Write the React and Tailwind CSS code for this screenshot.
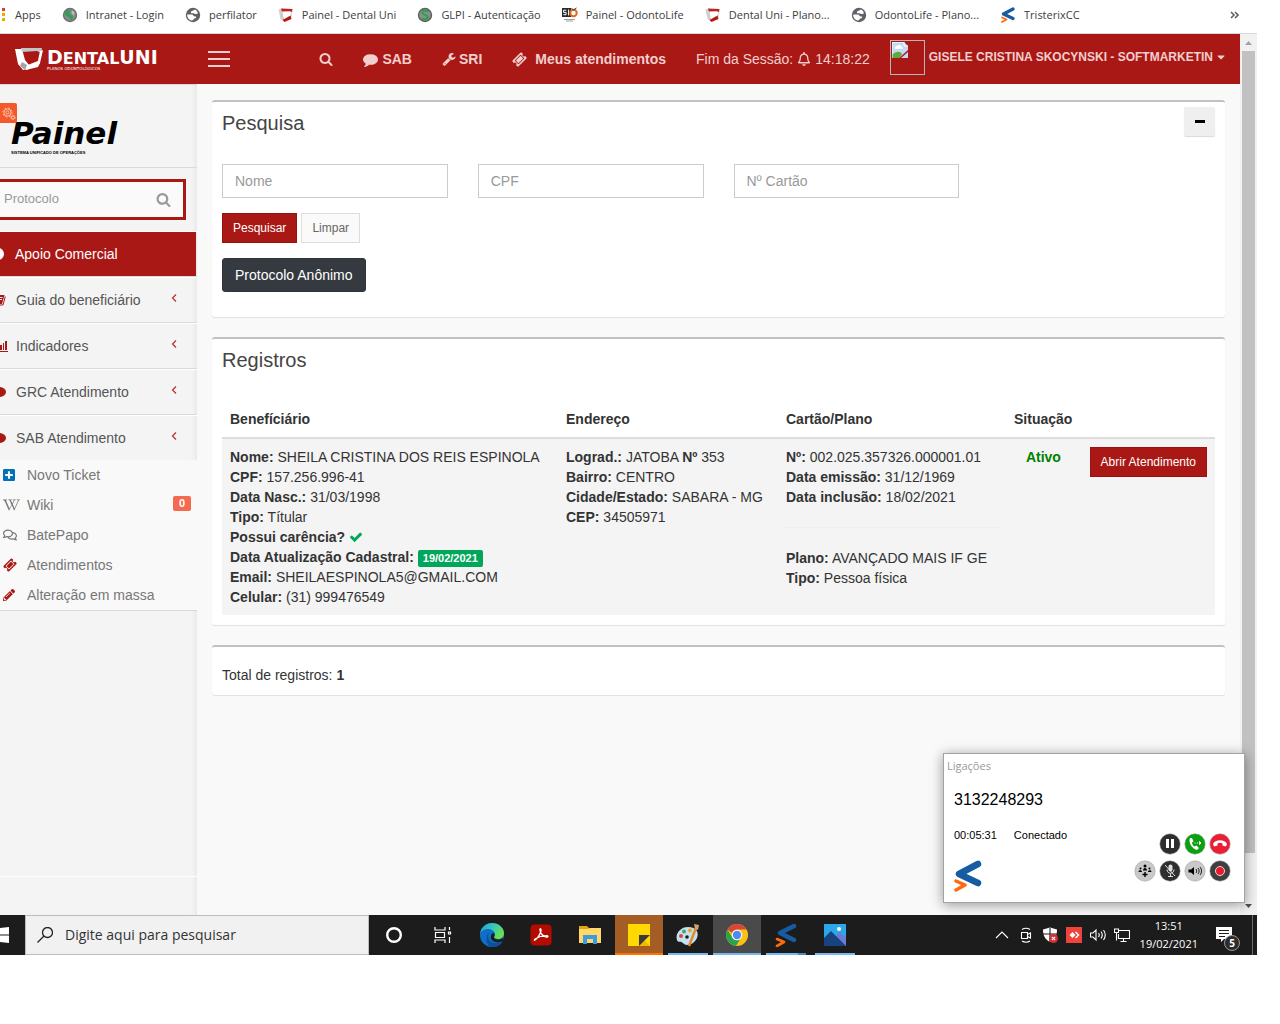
import { FaCaretDown, FaPencilAlt, FaPlusSquare, FaRegBell, FaRegComments, FaWikipediaW } from 'react-icons/fa';

// 1792-unit glyphs used around the panel
const glyphs = {
  search:
    'M1216 832q0-185-131.5-316.5t-316.5-131.5-316.5 131.5-131.5 316.5 131.5 316.5 316.5 131.5 316.5-131.5 131.5-316.5zm512 832q0 52-38 90t-90 38q-54 0-90-38l-343-342q-179 124-399 124-143 0-273.5-55.5t-225-150-150-225-55.5-273.5 55.5-273.5 150-225 225-150 273.5-55.5 273.5 55.5 225 150 150 225 55.5 273.5q0 220-124 399l343 343q37 37 37 90z',
  comment:
    'M1792 896q0 174-120 321.5t-326 233-450 85.5q-70 0-145-8-198 175-460 242-49 14-114 22-17 2-30.5-9t-17.5-29v-1q-3-4-.5-12t2-10 4.5-9.500l6-9 7-8.500 8-9q7-8 31-34.500t34.500-38 31-39.500 32.500-51 27-59 26-76q-157-89-247.500-220t-90.500-281q0-130 71-248.500t191-204.500 286-136.500 348-50.500 348 50.500 286 136.500 191 204.500 71 248.500z',
  wrench:
    'M448 1472q0-26-19-45t-45-19-45 19-19 45 19 45 45 19 45-19 19-45zm644-420l-682 682q-37 37-90 37-52 0-91-37l-106-108q-38-36-38-90 0-53 38-91l681-681q39 98 114.500 173.500t173.500 114.500zm634-435q0 39-23 106-47 134-164.500 217.500t-258.500 83.500q-185 0-316.500-131.500t-131.500-316.500 131.500-316.500 316.500-131.500q58 0 121.500 16.500t107.500 46.500q16 11 16 28t-16 28l-293 169v224l193 107q5-3 79-48.500t135.500-81 70.500-35.500q15 0 23.500 10t8.500 25z',
  ticket:
    'M1024 452l316 316-572 572-316-316zm-211 979l618-618q19-19 19-45t-19-45l-362-362q-18-18-45-18t-45 18l-618 618q-19 19-19 45t19 45l362 362q18 18 45 18t45-18zm889-637l-907 908q-37 37-90.5 37t-90.5-37l-126-126q56-56 56-136t-56-136-136-56-136 56l-125-126q-37-37-37-90.500t37-90.500l907-906q37-37 90.500-37t90.500 37l125 125q-56 56-56 136t56 136 136 56 136-56l126 125q37 37 37 90.500t-37 90.500z',
  check:
    'M1671 566q0 40-28 68l-724 724-136 136q-28 28-68 28t-68-28l-136-136-362-362q-28-28-28-68t28-68l136-136q28-28 68-28t68 28l294 295 656-657q28-28 68-28t68 28l136 136q28 28 28 68z',
};

function Glyph({ name, className }) {
  return (
    <svg viewBox="0 0 1792 1792" fill="currentColor" className={className} aria-hidden="true">
      <path d={glyphs[name]} />
    </svg>
  );
}

/* ---------- logos ---------- */

function TristerixIcon({ className }) {
  return (
    <svg viewBox="0 0 28 32" className={className} fill="none" strokeLinecap="round" strokeLinejoin="round">
      <path d="M24 4L5 14l19 9" stroke="#175ca3" strokeWidth="6.500" />
      <path d="M2 21l9 4-9 5" stroke="#ff6a0d" strokeWidth="3.500" />
    </svg>
  );
}

function GlpiIcon() {
  return (
    <svg viewBox="0 0 16 16" className="h-4 w-4 shrink-0">
      <circle cx="8" cy="8" r="7.200" fill="#5c5f5e" />
      <circle cx="8" cy="8" r="5.800" fill="#8b908d" />
      <path d="M11.500 4.800C9.500 3 5.200 3.300 5.200 5.800c0 2.200 5.600 1.800 5.600 4.400 0 2.200-3.800 2.600-6 1" fill="none" stroke="#2fa050" strokeWidth="2" />
    </svg>
  );
}

function GlobeIcon() {
  return (
    <svg viewBox="0 0 16 16" className="h-4 w-4 shrink-0">
      <circle cx="8" cy="8" r="7.200" fill="#5f6368" />
      <path d="M2.200 7.600h4.600c1.600 0 1.500 1.900 3 1.900h1.200c.8 1.200-.6 2.300-2.200 2.300-.3 1-1 1.700-2 1.700C4 13.200 2 10.500 2.200 7.600zM12.800 6.500c-1.600.8-3.300.7-4.300-.2H6.300c-1.200-1.300.2-2.600 1.800-2.600.5-1 1.500-1.300 2.500-.9 1.200.7 2.100 2 2.200 3.700z" fill="#fff" />
    </svg>
  );
}

function GreenOrb() {
  return (
    <svg viewBox="0 0 16 16" className="h-4 w-4 shrink-0">
      <circle cx="8" cy="8" r="7.200" fill="#6d6f70" />
      <circle cx="8" cy="8" r="5.800" fill="#868a88" />
      <path d="M3 5.500C5 2.500 8 3 9 4 7 4.500 6.500 6 8.500 7.500S12 11 9.500 13.500C8.500 11.500 8 10.500 5.800 9.500S2.600 7.500 3 5.500z" fill="#2f9e57" />
      <path d="M10 3l2.500 2.500L12 9 9.500 6z" fill="#b9c2bd" />
    </svg>
  );
}

function DentalIcon() {
  return (
    <svg viewBox="0 0 16 16" className="h-4 w-4 shrink-0">
      <path d="M.5 2.500L4 1.500l1.500 8.500 1.500 5L2.500 12z" fill="#cfcfcf" />
      <path d="M3 1.500l11.500.5-.5 3.500-2-1.300-8 .3z" fill="#c0231c" />
      <path d="M13 5l1.500-.5-1 7-2 1z" fill="#dedede" />
      <path d="M4.500 13l8-4.500 1 3.500-7 3z" fill="#b51a15" />
    </svg>
  );
}

function SioIcon() {
  return (
    <svg viewBox="0 0 16 16" className="h-4 w-4 shrink-0">
      <path d="M0 1h9v9H0z" fill="#2b2b2b" />
      <path d="M4.200 3.200H1.600v2.200h2.500v2.300H1.300M6.600 2.500v6" stroke="#fff" strokeWidth="1" fill="none" />
      <circle cx="11.500" cy="6" r="3.200" fill="none" stroke="#e06a1c" strokeWidth="2" />
      <path d="M9.500 1.500l2 1.500 3-2" stroke="#333" fill="none" />
      <path d="M2 12.500h11M4 14h7" stroke="#888" strokeWidth=".8" />
    </svg>
  );
}

function DentalUniLogo() {
  return (
    <a href="#" className="flex w-[193px] shrink-0 items-center gap-1 pl-[15px] text-white">
      <svg viewBox="0 0 28 22" className="h-[22px] w-[28px] shrink-0">
        <path d="M0 1l7 0 3 11 4 5 0 4-6 1-5-6z" fill="#fff" />
        <path d="M6 0h21l-1 5-4-2-15 1z" fill="#c4c4c4" />
        <path d="M25 3l3-1-3 13-3 2z" fill="#fff" />
        <path d="M10 18l13-5 2 2-2 4-12 3z" fill="#fff" />
        <path d="M7 14l5 3-2 5-5-4z" fill="#a5a5a5" />
      </svg>
      <span className="flex flex-col pt-1 font-['DejaVu_Sans'] font-bold">
        <span className="text-[19px] leading-[14px]">
          D<span className="text-base leading-[14px]">ENTAL</span>UNI
        </span>
        <span className="text-[4px] leading-[6px] font-normal">PLANOS ODONTOLÓGICOS</span>
      </span>
    </a>
  );
}

/* ---------- bookmarks ---------- */

const bookmarks = [
  { label: 'Intranet - Login', icon: <GreenOrb /> },
  { label: 'perfilator', icon: <GlobeIcon /> },
  { label: 'Painel - Dental Uni', icon: <DentalIcon /> },
  { label: 'GLPI - Autenticação', icon: <GlpiIcon /> },
  { label: 'Painel - OdontoLife', icon: <SioIcon /> },
  { label: 'Dental Uni - Plano...', icon: <DentalIcon /> },
  { label: 'OdontoLife - Plano...', icon: <GlobeIcon /> },
  { label: 'TristerixCC', icon: <TristerixIcon className="h-4 w-4 shrink-0" /> },
];

function BookmarksBar() {
  return (
    <nav className="flex h-[34px] shrink-0 items-center gap-[21px] overflow-hidden border-b border-[#d5d7da] bg-white pr-[18px] pb-1 font-['Open_Sans',sans-serif] text-[11px] whitespace-nowrap text-[#3c4043]">
      <a href="#" className="flex items-center gap-[9px]">
        <svg viewBox="0 0 6 14" className="h-[14px] w-[6px]">
          <path d="M2 0h3v3H2z" fill="#e33b2e" />
          <path d="M2 5h3v3H2zM2 10h3v3H2z" fill="#f2a600" />
        </svg>
        Apps
      </a>
      {bookmarks.map((b) => (
        <a key={b.label} href="#" className="flex items-center gap-2">
          {b.icon}
          {b.label}
        </a>
      ))}
      <button className="ml-auto" aria-label="Mais favoritos">
        <svg viewBox="0 0 9 8" className="h-2 w-[9px]" fill="none" stroke="#5f6368" strokeWidth="1.600">
          <path d="M1 1l3 3-3 3M5 1l3 3-3 3" />
        </svg>
      </button>
    </nav>
  );
}

/* ---------- header ---------- */

function Header() {
  return (
    <header className="flex h-[50px] shrink-0 items-center overflow-hidden bg-[#aa1815] text-sm whitespace-nowrap text-[#f0cfce]">
      <DentalUniLogo />
      <button className="ml-[15px] flex w-[22px] shrink-0 flex-col gap-[5px]" aria-label="Menu">
        <span className="h-[2px] w-full bg-[#f0cfce]" />
        <span className="h-[2px] w-full bg-[#f0cfce]" />
        <span className="h-[2px] w-full bg-[#f0cfce]" />
      </button>
      <div className="ml-auto flex items-center gap-[30px] font-bold">
        <button aria-label="Buscar">
          <Glyph name="search" className="h-[14px] w-[14px]" />
        </button>
        <a href="#" className="flex items-center gap-1">
          <Glyph name="comment" className="h-[15px] w-[15px]" />
          SAB
        </a>
        <a href="#" className="flex items-center gap-[3px]">
          <Glyph name="wrench" className="h-[14px] w-[14px]" />
          SRI
        </a>
        <a href="#" className="flex items-center gap-2">
          <Glyph name="ticket" className="h-[15px] w-[15px]" />
          Meus atendimentos
        </a>
        <span className="flex items-center gap-1 font-normal">
          Fim da Sessão: <FaRegBell className="h-[14px] w-[14px]" /> 14:18:22
        </span>
      </div>
      <button className="mr-[15px] ml-5 flex items-center gap-1 pb-1 text-xs font-bold">
        <span className="h-[35px] w-[35px] border border-[#b5b5b5] p-px">
          <svg viewBox="0 0 16 16" className="h-4 w-4">
            <path d="M0 0h12l4 4v12H0z" fill="#c5d8f4" />
            <path d="M3 7a2 2 0 012-3 3 3 0 015 1 1.500 1.500 0 011 2z" fill="#fff" />
            <path d="M0 16v-3c4-4 8-4 10-1l-3 4z" fill="#58ad3f" />
            <path d="M7 16l9-8v2l-7 6z" fill="#aa1815" />
            <path d="M12 0v4h4M0 16V0h12" fill="none" stroke="#fff" />
          </svg>
        </span>
        GISELE CRISTINA SKOCYNSKI - SOFTMARKETIN
        <FaCaretDown className="h-3 w-2" />
      </button>
    </header>
  );
}

/* ---------- sidebar ---------- */

const menu = [
  {
    label: 'Guia do beneficiário',
    icon: (
      <svg viewBox="0 0 14 12" className="h-3 w-[14px]">
        <path d="M4 1h8.500L10 10H1.500z" fill="#aa1815" />
        <path d="M5.500 3.500h5M5 5.500h5" stroke="#f4f4f4" />
        <path d="M13.300 2.500L11 11H2" fill="none" stroke="#aa1815" />
      </svg>
    ),
  },
  {
    label: 'Indicadores',
    icon: (
      <svg viewBox="0 0 16 12" className="h-3 w-4" fill="#aa1815">
        <path d="M0 11h16v1H0zM4 6h2v4H4zM8 5h2v5H8zM11 3h1v7h-1zM13 1h2v9h-2z" />
      </svg>
    ),
  },
  { label: 'GRC Atendimento', icon: <span className="h-[10px] w-[14px] rounded-[50%] bg-[#aa1815]" /> },
  { label: 'SAB Atendimento', icon: <span className="h-[10px] w-[14px] rounded-[50%] bg-[#aa1815]" />, open: true },
];

const submenu = [
  { label: 'Novo Ticket', icon: <FaPlusSquare className="h-[14px] w-3 text-[#0073b7]" /> },
  { label: 'Wiki', icon: <FaWikipediaW className="h-[14px] w-[17px]" />, badge: '0' },
  { label: 'BatePapo', icon: <FaRegComments className="h-[14px] w-[14px]" /> },
  { label: 'Atendimentos', icon: <Glyph name="ticket" className="h-[14px] w-[14px] text-[#aa1815]" /> },
  { label: 'Alteração em massa', icon: <FaPencilAlt className="h-3 w-3 text-[#aa1815]" /> },
];

function Sidebar() {
  return (
    <aside className="flex w-[197px] shrink-0 flex-col overflow-hidden border-t border-[#d9d9d9] bg-[#f4f4f4] text-sm text-[#555] shadow-[inset_-4px_0_6px_-3px_rgba(0,0,0,0.07)]">
      <div className="relative flex h-[83px] shrink-0 flex-col border-b border-[#d9d9d9] pt-[30px] pl-[11px] text-black">
        <button className="absolute top-[18px] left-0 flex h-5 w-[17px] items-center justify-center rounded-r-xs bg-[#f4592b]" aria-label="Configurações">
          <svg viewBox="0 0 14 13" className="h-[13px] w-[14px]" fill="none" stroke="#ffc5b0">
            <circle cx="5.500" cy="5.500" r="3.600" />
            <circle cx="5.500" cy="5.500" r="1.500" />
            <circle cx="5.500" cy="5.500" r="4.600" strokeDasharray="1.800 1.800" />
            <circle cx="11" cy="10.500" r="1.500" />
            <circle cx="11" cy="10.500" r="2.200" strokeDasharray="1 1" />
          </svg>
        </button>
        <div className="font-['DejaVu_Sans'] text-[31px] leading-9 font-bold italic">Painel</div>
        <div className="text-[4px] leading-[4px] font-bold">SISTEMA UNIFICADO DE OPERAÇÕES</div>
      </div>
      <form className="my-[11px] mr-[11px] flex h-[41px] shrink-0 items-center border-[3px] border-l-0 border-[#aa1815] bg-[#fafafa] pr-3" onSubmit={(e) => e.preventDefault()}>
        <input type="text" placeholder="Protocolo" aria-label="Protocolo" className="w-0 flex-1 px-1 text-[13px] outline-none placeholder:text-[#999]" />
        <button aria-label="Buscar protocolo">
          <Glyph name="search" className="h-[15px] w-[15px] text-[#999]" />
        </button>
      </form>
      <ul>
        <li className="h-[46px] border-t border-b border-t-white border-b-[#d9d9d9] pr-px">
          <a href="#" className="flex h-full items-center gap-[11px] bg-[#aa1815] text-white">
            <span className="-ml-2 h-3 w-3 rounded-full bg-white" />
            Apoio Comercial
          </a>
        </li>
        {menu.map((item) => (
          <li key={item.label} className={item.open ? 'h-[45px] border-t border-white' : 'h-[46px] border-t border-b border-t-white border-b-[#d9d9d9]'}>
            <a href="#" className="flex h-full items-center">
              <span className="-ml-2 flex w-6 shrink-0">{item.icon}</span>
              <span className="flex-1">{item.label}</span>
              <svg viewBox="0 0 6 10" className="mr-5 mb-1 h-[10px] w-[6px]" fill="none" stroke="#b8302d" strokeWidth="1.200">
                <path d="M5 1.500L1.500 5 5 8.500" />
              </svg>
            </a>
          </li>
        ))}
      </ul>
      <ul className="border-b border-[#d9d9d9] bg-[#f9f9f9] text-[#777]">
        {submenu.map((item) => (
          <li key={item.label}>
            <a href="#" className="flex h-[30px] items-center pr-[6px] pl-[3px]">
              <span className="flex w-6 shrink-0">{item.icon}</span>
              <span className="flex-1">{item.label}</span>
              {item.badge && <span className="mb-1 rounded-xs bg-[#f66951] px-[6px] text-[11px] leading-[15px] font-bold text-white">{item.badge}</span>}
            </a>
          </li>
        ))}
      </ul>
      <div className="mt-auto h-[39px] shrink-0 border-t border-white" />
    </aside>
  );
}

/* ---------- main content ---------- */

function Card({ children }) {
  return (
    <section className="rounded-[3px] border-t-2 border-[#c1c1c1] bg-white p-[10px] shadow-[0_1px_1px_rgba(0,0,0,0.1)]">
      {children}
    </section>
  );
}

function Field({ label, value }) {
  return (
    <div>
      <b>{label}</b> {value}
    </div>
  );
}

function SearchCard() {
  return (
    <Card>
      <div className="flex h-[52px] items-start justify-between">
        <h3 className="text-xl leading-[22px] text-[#444]">Pesquisa</h3>
        <button className="-mt-[5px] flex h-[29px] w-[31px] items-center justify-center rounded-xs bg-[#efefef] shadow-[0_1px_1px_rgba(0,0,0,0.15)]" aria-label="Recolher">
          <span className="h-[3px] w-[10px] bg-black" />
        </button>
      </div>
      <form onSubmit={(e) => e.preventDefault()}>
        <div className="grid grid-cols-4 gap-[30px]">
          {['Nome', 'CPF', 'Nº Cartão'].map((name) => (
            <input
              key={name}
              type="text"
              placeholder={name}
              aria-label={name}
              className="h-[34px] w-full min-w-0 border border-[#ccc] px-3 placeholder:text-[#999]"
            />
          ))}
        </div>
        <div className="mt-[15px] flex gap-1 text-xs">
          <button type="submit" className="h-[30px] border border-[#98120f] bg-[#aa1815] px-[10px] text-white">
            Pesquisar
          </button>
          <button type="reset" className="h-[30px] border border-[#ddd] bg-[#fafafa] px-[10px] text-[#666]">
            Limpar
          </button>
        </div>
      </form>
      <button className="mt-[15px] mb-[15px] block h-[34px] rounded-[3px] border border-[#2f353a] bg-[#343a40] px-3 text-white">
        Protocolo Anônimo
      </button>
    </Card>
  );
}

function RecordsCard() {
  return (
    <Card>
      <h3 className="mb-[30px] text-xl leading-[22px] text-[#444]">Registros</h3>
      <table className="w-full border-collapse text-left">
        <thead>
          <tr className="border-b-2 border-[#ddd]">
            <th className="w-[336px] p-2">Benefíciário</th>
            <th className="w-[220px] p-2">Endereço</th>
            <th className="w-[228px] p-2">Cartão/Plano</th>
            <th className="p-2">Situação</th>
            <th className="p-2" aria-label="Ações" />
          </tr>
        </thead>
        <tbody>
          <tr className="bg-[#f4f4f4] align-top">
            <td className="p-2">
              <Field label="Nome:" value="SHEILA CRISTINA DOS REIS ESPINOLA" />
              <Field label="CPF:" value="157.256.996-41" />
              <Field label="Data Nasc.:" value="31/03/1998" />
              <Field label="Tipo:" value="Títular" />
              <Field label="Possui carência?" value={<Glyph name="check" className="inline h-[14px] w-[14px] align-[-2px] text-[#00a65a]" />} />
              <Field
                label="Data Atualização Cadastral:"
                value={<span className="inline-block h-[17px] rounded-xs bg-[#00a65a] px-[5px] align-bottom text-[11px] leading-[17px] font-bold text-white">19/02/2021</span>}
              />
              <Field label="Email:" value="SHEILAESPINOLA5@GMAIL.COM" />
              <Field label="Celular:" value="(31) 999476549" />
            </td>
            <td className="p-2">
              <div>
                <b>Lograd.:</b> JATOBA <b>Nº</b> 353
              </div>
              <Field label="Bairro:" value="CENTRO" />
              <Field label="Cidade/Estado:" value="SABARA - MG" />
              <Field label="CEP:" value="34505971" />
            </td>
            <td className="p-2">
              <Field label="Nº:" value="002.025.357326.000001.01" />
              <Field label="Data emissão:" value="31/12/1969" />
              <Field label="Data inclusão:" value="18/02/2021" />
              <hr className="my-5 border-[#eee]" />
              <Field label="Plano:" value="AVANÇADO MAIS IF GE" />
              <Field label="Tipo:" value="Pessoa física" />
            </td>
            <td className="p-2 text-center font-bold text-[#008000]">Ativo</td>
            <td className="p-2 text-right">
              <button className="h-[30px] border border-[#98120f] bg-[#aa1815] px-[10px] text-xs whitespace-nowrap text-white">Abrir Atendimento</button>
            </td>
          </tr>
        </tbody>
      </table>
    </Card>
  );
}

/* ---------- softphone ---------- */

const callButtons = [
  {
    label: 'Pausar',
    color: '#2e2e2e',
    art: <path d="M7 6h3v9H7zM12 6h3v9h-3z" fill="#fff" />,
  },
  {
    label: 'Transferir',
    color: '#0aa00f',
    art: (
      <>
        <path d="M6 5c-2 4 2 11 7 12l2-2-2.500-2.500-2 1C9 12.500 8 11 8 9.500l1.500-1L8 5z" fill="#fff" />
        <path d="M10.500 10h1M13 10h1M15.500 8.500l1.500 1.500-1.500 1.500z" fill="#fff" stroke="#fff" />
      </>
    ),
  },
  {
    label: 'Desligar',
    color: '#ea1f35',
    art: <path d="M4 11c2-5 12-5 14 0l-1 2.500-3.500-1V10.500c-1.500-.6-3.500-.6-5 0v2l-3.500 1z" fill="#fff" />,
  },
  {
    label: 'Conferência',
    color: '#c9c9c9',
    art: (
      <>
        <circle cx="11" cy="6" r="1.500" />
        <circle cx="6.500" cy="8.500" r="1" />
        <circle cx="15.500" cy="8.500" r="1" />
        <path d="M9 10.500c0-3.500 4-3.500 4 0zM4.500 12c0-2.500 3.500-2.500 3.500 0zM14 12c0-2.500 3.500-2.500 3.500 0zM10.300 12h1.400v1.800h1.800v1.400h-1.800V17h-1.400v-1.800H8.500v-1.400h1.800z" />
      </>
    ),
  },
  {
    label: 'Mudo',
    color: '#2e2e2e',
    art: (
      <>
        <rect x="9.500" y="4.500" width="4" height="7" rx="2" fill="#ddd" />
        <path d="M8 9.500c0 5 7 5 7 0M11.500 13.500v3M9 16.500h5M6 5l10 11" fill="none" stroke="#ddd" />
      </>
    ),
  },
  {
    label: 'Volume',
    color: '#c9c9c9',
    art: (
      <>
        <path d="M4.500 9.500h2.500l3-2.500v8l-3-2.500H4.500z" />
        <path d="M12 9c1 1 1 3 0 4M14 8c1.500 2 1.500 4 0 6M16 7c2 2.500 2 5.500 0 8" fill="none" stroke="#222" />
      </>
    ),
  },
  {
    label: 'Gravar',
    color: '#3f3f3f',
    art: <circle cx="11" cy="11" r="4.500" fill="#ee1630" stroke="#ddd" />,
  },
];

function CallButton({ button }) {
  return (
    <button aria-label={button.label}>
      <svg viewBox="0 0 22 22" className="h-[22px] w-[22px]">
        <circle cx="11" cy="11" r="10.200" fill={button.color} stroke="#999" strokeOpacity=".5" />
        {button.art}
      </svg>
    </button>
  );
}

function CallWindow() {
  return (
    <section className="absolute right-3 bottom-3 flex h-[150px] w-[302px] flex-col border border-[#a3a3a3] bg-white px-[10px] text-black shadow-[0_2px_12px_rgba(0,0,0,0.4)]">
      <h2 className="-ml-[7px] pt-1 font-['Open_Sans',sans-serif] text-[11px] leading-4 text-[#999]">Ligações</h2>
      <p className="mt-4 text-base leading-5">3132248293</p>
      <p className="mt-[19px] flex gap-[17px] text-[11px] leading-3">
        <span>00:05:31</span>
        <span>Conectado</span>
      </p>
      <div className="flex items-end justify-between pr-[3px]">
        <TristerixIcon className="h-8 w-7" />
        <div className="-mt-2 flex flex-col items-end gap-[5px] pb-[10px]">
          <div className="flex gap-[3px]">
            {callButtons.slice(0, 3).map((b) => (
              <CallButton key={b.label} button={b} />
            ))}
          </div>
          <div className="flex gap-[3px]">
            {callButtons.slice(3).map((b) => (
              <CallButton key={b.label} button={b} />
            ))}
          </div>
        </div>
      </div>
    </section>
  );
}

function ScrollBar() {
  return (
    <div className="flex w-[17px] shrink-0 flex-col items-center bg-[#f1f1f1]">
      <svg viewBox="0 0 17 17" className="h-[17px] w-[17px]">
        <path d="M5 11h7L8.500 7z" fill="#a3a3a3" />
      </svg>
      <div className="mb-[45px] w-[13px] flex-1 bg-[#c1c1c1]" />
      <svg viewBox="0 0 17 17" className="h-[17px] w-[17px]">
        <path d="M5 6h7l-3.500 4z" fill="#505050" />
      </svg>
    </div>
  );
}

/* ---------- taskbar ---------- */

const apps = [
  {
    label: 'Cortana',
    art: <circle cx="12" cy="12" r="6.800" fill="none" stroke="#fff" strokeWidth="2.400" />,
  },
  {
    label: 'Visão de tarefas',
    art: (
      <path d="M4 4v3h10V4M4 20v-3h10v3M4.500 9.500h9v5h-9zM18.500 4v3M18.500 14v6M17.500 9h2v2h-2z" fill="none" stroke="#fff" strokeWidth="1.200" />
    ),
  },
  {
    label: 'Edge',
    art: (
      <>
        <defs>
          <linearGradient id="edgeTop" x1="0" y1="0" x2="1" y2="0.500">
            <stop offset="0" stopColor="#1c9be0" />
            <stop offset="0.600" stopColor="#3ecbb5" />
            <stop offset="1" stopColor="#6be04a" />
          </linearGradient>
        </defs>
        <circle cx="12" cy="12" r="12" fill="#0f6fc4" />
        <path d="M0 11C1 4 6 0 12 0c7 0 12 5 12 10 0 4-3 6-6 6-2 0-4-1-4-2s1-1 1-3c0-3-4-5-7-5-4 0-7 2-8 5z" fill="url(#edgeTop)" />
        <path d="M8 13c0 5 5 8 10 7 2 0 4-1 5-2-2 4-6 6-10 6C6 24 4 13 10 9c-1 1-2 2-2 4z" fill="#0b4f9e" />
        <path d="M14 14c0 2 3 4 9 1v3c-3 2-9 2-11-1-2-2-1-6 1-7 2 1 2 2 1 4z" fill="#1c1c1c" />
      </>
    ),
  },
  {
    label: 'Acrobat',
    art: (
      <>
        <rect x="1.500" y="1.500" width="21" height="21" rx="4" fill="#b30b00" />
        <path d="M6 17c2-1 5-5 6-9 .5-3-1.500-3-1-.5.500 3 3.500 6 6.500 6.500 2 .3 2-1.500-.5-1.300-4 .2-8 1.500-10.500 3-1.500 1-1.300 2-.5 1.300z" fill="none" stroke="#fff" strokeWidth="1.300" />
      </>
    ),
  },
  {
    label: 'Explorador de Arquivos',
    art: (
      <>
        <path d="M1 3h8l2 2h12v4H1z" fill="#e0a419" />
        <path d="M1 6h9l2-1h11v15H1z" fill="#ffd867" />
        <path d="M5 12h14v9h-4v-5H9v5H5z" fill="#3b9be0" />
      </>
    ),
  },
  {
    label: 'Notas Autoadesivas',
    slot: 'bg-[#a55d26]',
    line: 'w-full bg-[#ff7200]',
    art: (
      <>
        <path d="M1 1h22v22H1z" fill="#ffd800" />
        <path d="M12 12v11h11z" fill="#f2b900" />
        <path d="M12 12h11L12 23z" fill="#3a3a3a" />
      </>
    ),
  },
  {
    label: 'Paint',
    line: 'w-10 bg-[#76b9ed]',
    art: (
      <>
        <path d="M12 4C4 4-1 11 1 17c1 3 4 1 6 3 2 3 7 2 10 0 5-4 6-10 3-13-2-2-4-3-8-3z" fill="#c4e1f3" />
        <circle cx="5" cy="13" r="2" fill="#d8433c" />
        <circle cx="8" cy="8.500" r="2" fill="#3fa85a" />
        <circle cx="14" cy="7.500" r="2" fill="#f0a32a" />
        <circle cx="11" cy="14" r="1.800" fill="#1c1c1c" />
        <path d="M20 5L13 23" stroke="#e18a2d" strokeWidth="2.500" />
        <path d="M18 1l5 1-1 5-3-1z" fill="#cfa173" />
      </>
    ),
  },
  {
    label: 'Chrome',
    slot: 'bg-[#4a4a4a]',
    line: 'w-full bg-[#76b9ed]',
    art: (
      <>
        <circle cx="12" cy="12" r="11" fill="#fbc116" />
        <path d="M2.500 6.500A11 11 0 0121.500 6.500H12a5.500 5.500 0 00-5 3.500z" fill="#d9453a" />
        <path d="M2.500 6.500A11 11 0 0011 23l4.500-7.500a5.500 5.500 0 01-8.300-1z" fill="#2ba24c" />
        <circle cx="12" cy="12" r="5.200" fill="#fff" />
        <circle cx="12" cy="12" r="4.200" fill="#4b8bf4" />
      </>
    ),
  },
  {
    label: 'TristerixCC',
    line: 'w-10 bg-[#76b9ed] border-r-8 border-[#5488b0]',
    art: (
      <g fill="none" strokeLinecap="round" strokeLinejoin="round">
        <path d="M20 3L6 10l14 7" stroke="#175ca3" strokeWidth="4.500" />
        <path d="M3 16l7 3-7 4" stroke="#ff6a0d" strokeWidth="2.600" />
      </g>
    ),
  },
  {
    label: 'Fotos',
    line: 'w-10 bg-[#76b9ed]',
    art: (
      <>
        <path d="M1 1h22v22H1z" fill="#2ba7ea" />
        <path d="M12 14l5-5 6 6v8H12z" fill="#6b7bd0" />
        <path d="M1 15l7-7 15 15H1z" fill="#174480" />
        <circle cx="16" cy="6" r="2" fill="#fff" />
      </>
    ),
  },
];

const tray = [
  { label: 'Mostrar ícones ocultos', art: <path d="M2 11l6-6 6 6" /> },
  { label: 'Reunir', art: <path d="M3.500 5.500h6v6h-6zM9.500 7.500l3-1.500v5l-3-1.500M4 2.500q4-2.500 8 0M4 14q4 2.500 8 0" /> },
  {
    label: 'Segurança',
    art: (
      <>
        <path d="M1 2.500l7-2 7 2c0 6-2 10-7 12.500C3 12.500 1 8.500 1 2.500z" fill="#fff" stroke="none" />
        <path d="M8 1v14M1 7h14" stroke="#1c1c1c" />
        <circle cx="11.500" cy="11.500" r="4.500" fill="#d32f2f" stroke="none" />
        <path d="M9.800 9.800l3.400 3.400M13.200 9.800l-3.400 3.400" />
      </>
    ),
  },
  {
    label: 'AnyDesk',
    art: (
      <>
        <path d="M0 0h16v16H0z" fill="#ef443b" stroke="none" />
        <path d="M6.500 5l3 3-3 3-3-3z" fill="#fff" stroke="none" />
        <path d="M9.500 5l3 3-3 3" strokeWidth="1.500" />
      </>
    ),
  },
  { label: 'Som', art: <path d="M.5 6H3l3-3v10L3 10H.5zM8.500 6q1.500 2 0 4M11 4.500q2.500 3.500 0 7M13.500 3q3.500 5 0 10" /> },
  { label: 'Rede', art: <path d="M5 3.500h10.500v8H4.500V7M.5 2h4v3.500h-4zM2.500 5.500v8M9.500 11.500V14M6.500 14.500h6" /> },
];

function Taskbar() {
  return (
    <footer className="flex h-10 shrink-0 overflow-hidden bg-[#1c1c1c] font-['Open_Sans',sans-serif] text-white">
      <button className="flex w-[25px] shrink-0 items-center" aria-label="Iniciar">
        <svg viewBox="0 0 9 16" className="h-4 w-[9px]" fill="#fff">
          <path d="M0 1l9-1v7.500H0zM0 8.500h9V16l-9-1z" />
        </svg>
      </button>
      <label className="flex w-[344px] items-center gap-3 border border-[#bcbcbc] bg-[#f1f1f1] pl-[11px] text-[#333]">
        <svg viewBox="0 0 16 16" className="h-4 w-4 shrink-0" fill="none" stroke="#222" strokeWidth="1.300">
          <circle cx="10.500" cy="5.500" r="5" />
          <path d="M7 9l-6.500 6.500" />
        </svg>
        <input type="text" placeholder="Digite aqui para pesquisar" aria-label="Pesquisar" className="w-0 flex-1 text-sm outline-none placeholder:text-[#333]" />
      </label>
      <div className="flex shrink-0 gap-px pl-px">
        {apps.map((app) => (
          <button key={app.label} aria-label={app.label} className={`flex w-12 flex-col items-center ${app.slot || ''}`}>
            <span className="flex flex-1 items-center">
              <svg viewBox="0 0 24 24" className="h-6 w-6">
                {app.art}
              </svg>
            </span>
            <span className={`-mt-[2px] h-[2px] ${app.line || ''}`} />
          </button>
        ))}
      </div>
      <div className="ml-auto flex shrink-0 items-center gap-2">
        {tray.map((item) => (
          <button key={item.label} aria-label={item.label}>
            <svg viewBox="0 0 16 16" className="h-4 w-4" fill="none" stroke="#fff" strokeWidth="1.100">
              {item.art}
            </svg>
          </button>
        ))}
      </div>
      <div className="ml-[10px] flex shrink-0 flex-col justify-center text-center text-[11px] leading-[18px]">
        <span>13:51</span>
        <span>19/02/2021</span>
      </div>
      <button className="relative mr-3 ml-[18px] w-6 shrink-0" aria-label="5 notificações">
        <svg viewBox="0 0 16 16" className="h-4 w-4" fill="#fff">
          <path d="M0 0h16v12H8l-3 3v-3H0z" />
          <path d="M3 3.500h10M3 6.500h10M3 9.500h6" stroke="#1c1c1c" />
        </svg>
        <span className="absolute right-0 bottom-1 h-4 w-4 rounded-full border border-[#999] bg-[#2c2c2c] text-[10px] leading-[14px] font-bold">5</span>
      </button>
      <span className="mr-1 w-px shrink-0 bg-[#6d6d6d]" />
    </footer>
  );
}

export default function App() {
  return (
    <div className="flex h-screen flex-col bg-white pr-[23px] pb-[69px] font-['Liberation_Sans',Arial,sans-serif] text-sm leading-5 text-[#333]">
      <BookmarksBar />
      <div className="relative flex min-h-0 flex-1">
        <div className="flex min-w-0 flex-1 flex-col">
          <Header />
          <div className="flex min-h-0 flex-1">
            <Sidebar />
            <main className="flex min-w-0 flex-1 flex-col gap-5 overflow-hidden bg-[#f9f9f9] px-[15px] pt-4">
              <SearchCard />
              <RecordsCard />
              <Card>
                <p className="pt-2">
                  Total de registros: <b>1</b>
                </p>
              </Card>
            </main>
          </div>
        </div>
        <ScrollBar />
        <CallWindow />
      </div>
      <Taskbar />
    </div>
  );
}
